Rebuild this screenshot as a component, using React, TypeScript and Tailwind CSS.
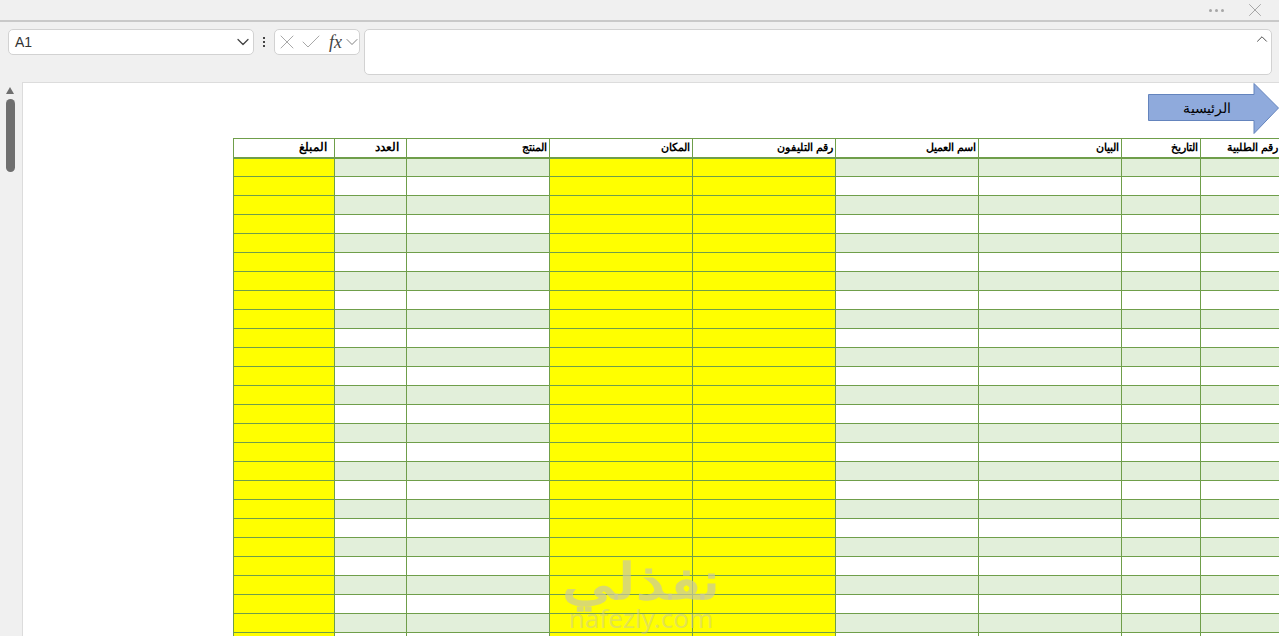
import { ChevronDown, ChevronUp, X, Check } from 'lucide-react';

const columns = [
  { label: 'المبلغ', width: 'w-[101px]', text: 'pr-[7px] text-[12px]', yellow: true },
  { label: 'العدد', width: 'w-[72px]', text: 'pr-[7px] text-[12px]', yellow: false },
  { label: 'المنتج', width: 'w-[143px]', text: 'pr-[2px] text-[11px]', yellow: false },
  { label: 'المكان', width: 'w-[143px]', text: 'pr-[2px] text-[11px]', yellow: true },
  { label: 'رقم التليفون', width: 'w-[143px]', text: 'pr-[2px] text-[11px]', yellow: true },
  { label: 'اسم العميل', width: 'w-[143px]', text: 'pr-[2px] text-[11px]', yellow: false },
  { label: 'البيان', width: 'w-[143px]', text: 'pr-[2px] text-[11px]', yellow: false },
  { label: 'التاريخ', width: 'w-[79px]', text: 'pr-[2px] text-[11px]', yellow: false },
  { label: 'رقم الطلبية', width: 'w-[90px]', text: 'pr-[12px] text-[11px]', yellow: false },
];

const rows = Array.from({ length: 26 }, (_, i) => i);

function cellColor(yellow: boolean, row: number) {
  if (yellow) return 'bg-[#ffff00]';
  return row % 2 === 0 ? 'bg-[#e2efda]' : 'bg-white';
}

export default function App() {
  return (
    <div className="h-[636px] w-[1279px] overflow-hidden bg-[#f0f0f0] font-['Liberation_Sans',sans-serif]">
      {/* Title strip */}
      <div className="flex h-[22px] items-center justify-end border-b-2 border-[#c9c9c9] pr-[13px]">
        <div className="mr-[20px] flex gap-[3px]">
          <span className="h-[3px] w-[3px] rounded-full bg-[#a6a6a6]" />
          <span className="h-[3px] w-[3px] rounded-full bg-[#a6a6a6]" />
          <span className="h-[3px] w-[3px] rounded-full bg-[#a6a6a6]" />
        </div>
        <X size={22} strokeWidth={1} className="text-[#a0a0a0]" />
      </div>

      {/* Formula bar */}
      <div className="flex h-[60px] items-start pl-2 pr-[7px] pt-[7px]">
        <div className="flex h-[26px] w-[246px] items-center justify-between rounded-[5px] border border-[#d2d2d2] bg-white pl-[6px] text-[14px] text-[#333333]">
          <span>A1</span>
          <ChevronDown size={20} strokeWidth={1.5} className="text-[#444444]" />
        </div>
        <div className="flex h-[26px] w-[20px] flex-col items-center justify-center gap-[2px]">
          <span className="h-[2px] w-[2px] bg-[#444444]" />
          <span className="h-[2px] w-[2px] bg-[#444444]" />
          <span className="h-[2px] w-[2px] bg-[#444444]" />
        </div>
        <div className="flex h-[26px] w-[86px] items-center rounded-[5px] border border-[#d2d2d2] bg-white">
          <X size={24} strokeWidth={1} className="shrink-0 text-[#a8a8a8]" />
          <Check size={24} strokeWidth={1} className="shrink-0 text-[#a8a8a8]" />
          <span className="ml-[6px] w-[15px] shrink-0 font-['Liberation_Serif',serif] text-[18px] leading-none text-[#444444] italic">fx</span>
          <ChevronDown size={20} strokeWidth={1} className="-ml-[2px] shrink-0 text-[#666666]" />
        </div>
        <div className="ml-[4px] flex h-[46px] flex-1 justify-end rounded-[5px] border border-[#d2d2d2] bg-white">
          <ChevronUp size={18} strokeWidth={1.25} className="text-[#444444]" />
        </div>
      </div>

      <div className="flex h-[554px]">
        {/* Vertical scrollbar */}
        <div className="flex w-[22px] flex-col items-start pl-[6px] pt-[5px]">
          <span className="h-0 w-0 border-x-[4.5px] border-b-[7px] border-x-transparent border-b-[#6f6f6f]" />
          <span className="mt-[5px] h-[73px] w-[9px] rounded-full bg-[#6f6f6f]" />
        </div>

        {/* Sheet */}
        <div className="relative flex-1 overflow-hidden border-l border-t border-[#dcdcdc] bg-white">
          <div className="flex h-[55px] justify-end">
            <svg width="131" height="51" viewBox="0 0 131 51" className="shrink-0">
              <path d="M0.5 11.5H106V0.5L130.5 25L106 50.5V37.5H0.5Z" fill="#8faadc" stroke="#6484bd" />
            </svg>
          </div>
          <div className="absolute right-[48px] top-[16px] text-[14px] leading-[18px] font-normal text-black" dir="rtl">
            الرئيسية
          </div>

          <div className="ml-[210px] w-[1100px]">
            <table className="table-fixed border-collapse">
              <thead>
                <tr className="h-[19px]">
                  {columns.map((col) => (
                    <th
                      key={col.label}
                      dir="rtl"
                      className={`${col.width} ${col.text} overflow-hidden whitespace-nowrap border border-b-2 border-[#6f9e4a] bg-white text-right leading-[17px] font-bold text-black`}
                    >
                      {col.label}
                    </th>
                  ))}
                </tr>
              </thead>
              <tbody>
                {rows.map((row) => (
                  <tr key={row} className="h-[19px]">
                    {columns.map((col) => (
                      <td key={col.label} className={`border border-[#6f9e4a] p-0 ${cellColor(col.yellow, row)}`} />
                    ))}
                  </tr>
                ))}
              </tbody>
            </table>
          </div>

          {/* Watermark */}
          <div className="absolute left-[540px] top-[476px] flex w-[156px] flex-col items-center text-[#c9c9a0]/70">
            <span dir="rtl" className="h-[46px] scale-x-[1.3] font-['Noto_Sans',sans-serif] text-[50px] leading-[42px] font-bold">نفذلي</span>
            <span className="font-['Noto_Sans',sans-serif] text-[26px] leading-[26px] font-normal opacity-70">nafezly.com</span>
          </div>
        </div>
      </div>
    </div>
  );
}
